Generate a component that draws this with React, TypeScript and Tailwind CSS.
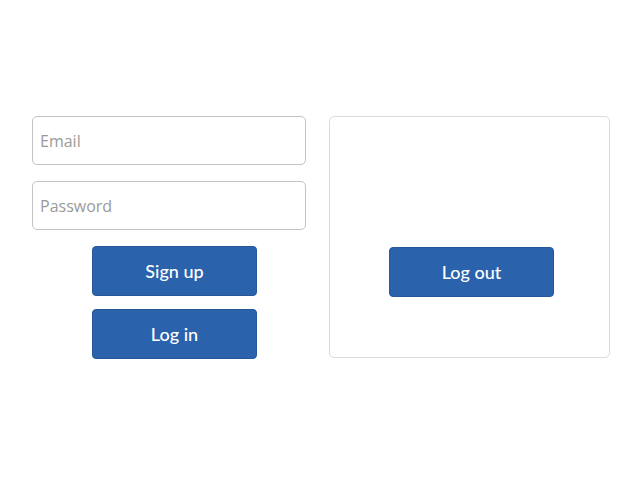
export default function App() {
  return (
    <div
      className="w-[640px] h-[480px] bg-white flex items-start"
      style={{ fontFamily: '"Open Sans", sans-serif' }}
    >
      <div className="ml-[32px] mt-[116px] w-[274px] flex flex-col">
        <input
          type="text"
          placeholder="Email"
          className="h-[49px] w-full rounded-[5px] border border-[#c4c4c4] px-[7px] text-[16px] text-[#333] placeholder:text-[#9a9a9a] outline-none"
        />
        <input
          type="password"
          placeholder="Password"
          className="mt-[16px] h-[49px] w-full rounded-[5px] border border-[#c4c4c4] px-[7px] text-[16px] text-[#333] placeholder:text-[#9a9a9a] outline-none"
        />
        <button className="mt-[16px] ml-[60px] h-[50px] w-[165px] rounded-[4px] bg-[#2a62ab] border border-[#25579a] text-white text-[18px] font-medium font-['Lato',sans-serif]">
          Sign up
        </button>
        <button className="mt-[13px] ml-[60px] h-[50px] w-[165px] rounded-[4px] bg-[#2a62ab] border border-[#25579a] text-white text-[18px] font-medium font-['Lato',sans-serif]">
          Log in
        </button>
      </div>

      <div className="ml-[23px] mt-[116px] w-[281px] h-[242px] rounded-[5px] border border-[#dcdcdc] flex flex-col">
        <button className="mt-[130px] ml-[59px] h-[50px] w-[165px] rounded-[4px] bg-[#2a62ab] border border-[#25579a] text-white text-[18px] font-medium font-['Lato',sans-serif]">
          Log out
        </button>
      </div>
    </div>
  );
}
